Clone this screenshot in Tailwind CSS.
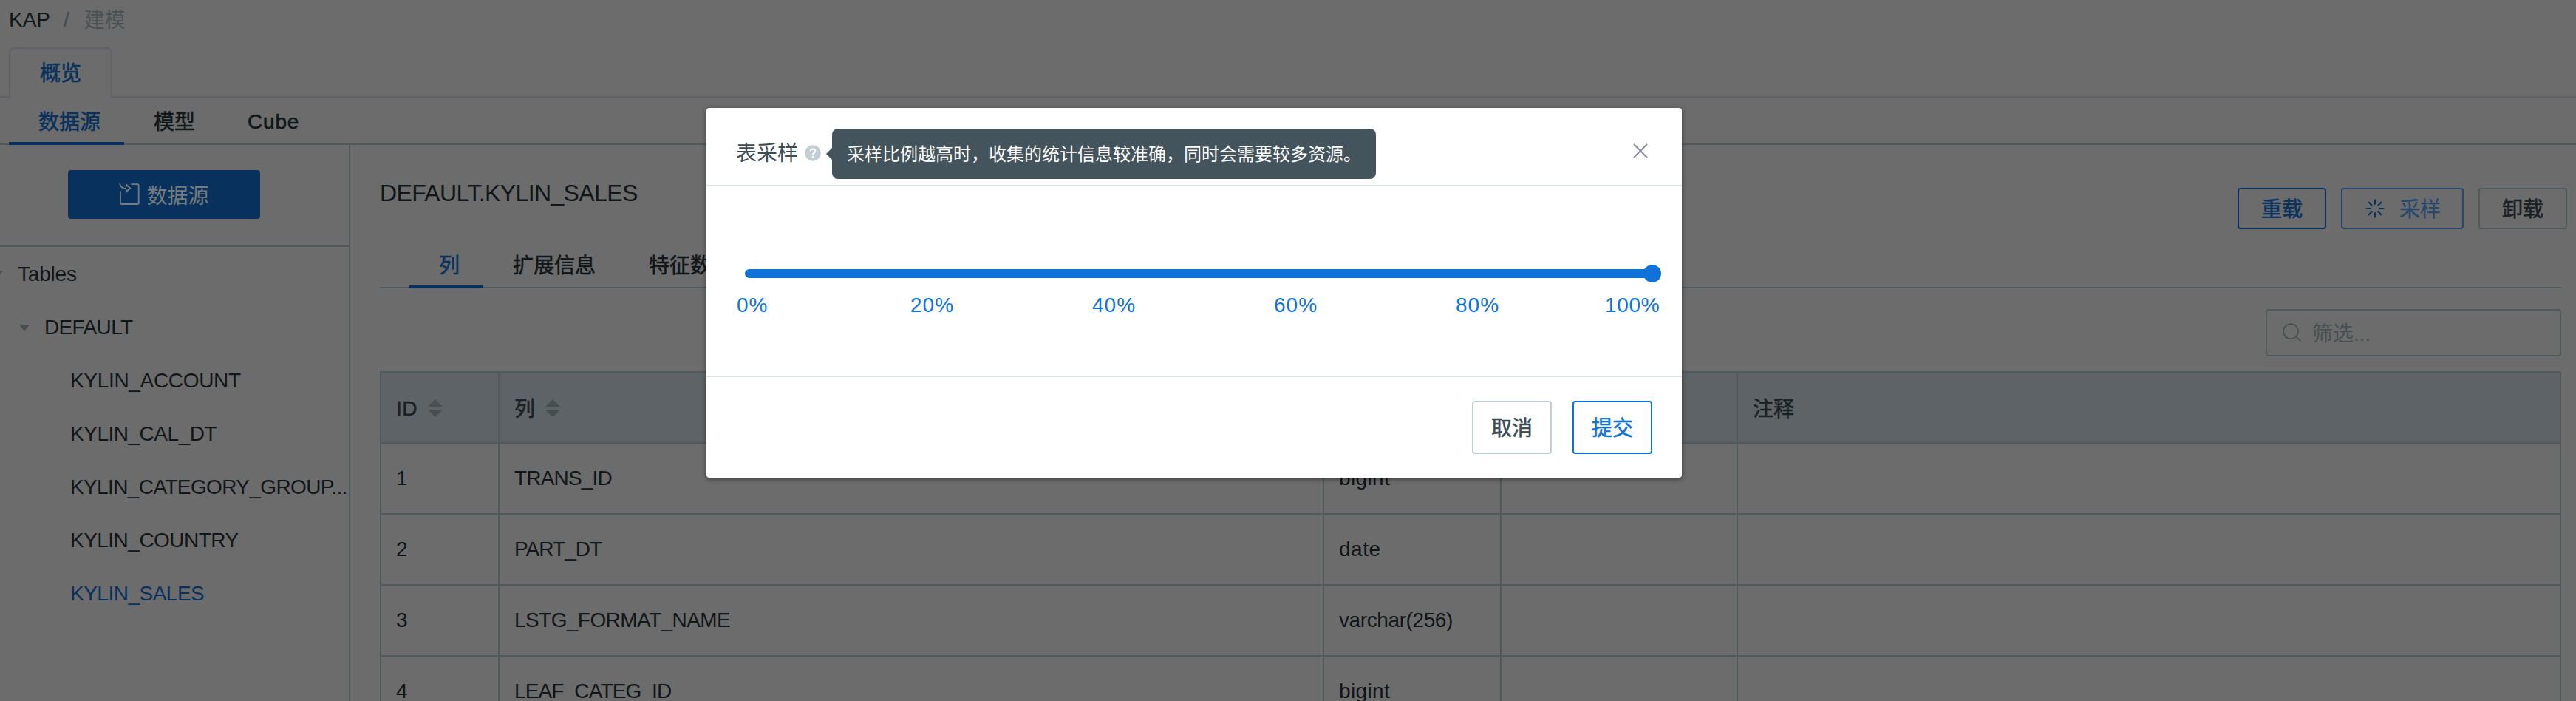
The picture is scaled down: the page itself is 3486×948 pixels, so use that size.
<!DOCTYPE html>
<html lang="zh-CN">
<head>
<meta charset="utf-8">
<title>KAP</title>
<script src="https://cdn.jsdelivr.net/npm/@tailwindcss/browser@4"></script>
</head>
<body class="relative h-[948px] w-[3486px] overflow-hidden bg-[#6c6c6c] font-['Liberation_Sans','Noto_Sans_CJK_SC',sans-serif] text-[28px] leading-10 text-[#111618]">

<!-- Breadcrumb -->
<nav class="flex h-16 items-start pl-3 pt-[7px]">
  <span>KAP</span><span class="ml-[18px] text-[#454e51] [-webkit-text-stroke:0.6px]">/</span><span class="ml-[20px] mt-px text-[#4a5254]">建模</span>
</nav>

<!-- Card tabs -->
<div class="flex h-[68px]">
  <div class="w-3 border-b-2 border-[#626167]"></div>
  <div class="flex w-[140px] items-center justify-center rounded-t-lg border-2 border-b-0 border-[#626167] pt-[2px] text-[#08325d] [-webkit-text-stroke:0.6px]"><span>概览</span></div>
  <div class="flex-1 border-b-2 border-[#626167]"></div>
</div>

<!-- Section tabs -->
<div class="flex h-16 border-b-2 border-[#52595c] pl-3 [-webkit-text-stroke:0.6px]">
  <div class="-mb-[2px] w-[156px] border-b-4 border-[#08325d] pl-10 pt-[14px] text-[#08325d]"><span>数据源</span></div>
  <div class="w-[128px] pl-10 pt-[14px]"><span>模型</span></div>
  <div class="pl-[39px] pt-[13px]"><span class="tracking-[0.8px]">Cube</span></div>
</div>

<div class="flex h-[752px]">
  <!-- Data source tree -->
  <aside class="w-[474px] shrink-0 border-r-2 border-[#52595c]">
    <div class="h-[138px] border-b-2 border-[#52595c] pl-[92px] pt-[34px]">
      <button class="flex h-[66px] w-[260px] items-center justify-center rounded-[4px] bg-[#08325d] text-[#777b7d]">
        <svg class="mr-[9px] h-[30px] w-[28px]" viewBox="0 0 28 30" fill="none" stroke="currentColor" stroke-width="1.800"><path d="M16.500 1.200h8.500q1.700 0 1.700 1.700v23.400q0 1.700-1.700 1.700H3.800Q2 28 2 26.300V10.500M1 0.500Q2.500 7 10 7M9.800 4.800V1.500L15.300 6.500 9.800 11.500V8.200"/></svg>
        <span class="mt-1.5">数据源</span>
      </button>
    </div>
    <div class="flex h-[72px] items-center pt-[2px]"><svg class="h-[10px] w-6" viewBox="0 0 24 10"><path d="M-10 0H4L-3 9z" fill="#4a5254"/></svg><span class="tracking-[-0.2px]">Tables</span></div>
    <div class="flex h-[72px] items-center pt-[2px]"><svg class="ml-[26px] mr-5 h-[9px] w-[14px]" viewBox="0 0 14 9"><path d="M0 0h14L7 9z" fill="#465052"/></svg><span class="tracking-[-0.64px]">DEFAULT</span></div>
    <div class="flex h-[72px] items-center pl-[95px] pt-[2px]"><span class="tracking-[-0.32px]">KYLIN_ACCOUNT</span></div>
    <div class="flex h-[72px] items-center pl-[95px] pt-[2px]"><span class="tracking-[-0.48px]">KYLIN_CAL_DT</span></div>
    <div class="flex h-[72px] items-center pl-[95px] pt-[2px]"><span class="tracking-[-0.62px]">KYLIN_CATEGORY_GROUP...</span></div>
    <div class="flex h-[72px] items-center pl-[95px] pt-[2px]"><span class="tracking-[-0.52px]">KYLIN_COUNTRY</span></div>
    <div class="flex h-[72px] items-center pl-[95px] pt-[2px] text-[#08325d]"><span class="tracking-[-0.5px]">KYLIN_SALES</span></div>
  </aside>

  <main class="flex-1 pl-10">
    <div class="flex h-[126px] justify-between pr-3">
      <h1 class="pt-[45px] text-[32px] leading-10 tracking-[-0.62px]">DEFAULT.KYLIN_SALES</h1>
      <div class="flex gap-5 pt-[58px] [-webkit-text-stroke:0.6px]">
        <button class="flex h-14 w-[120px] items-center justify-center rounded-[4px] border-2 border-[#08325d] pt-1 text-[#08325d]">重载</button>
        <button class="flex h-14 w-[166px] items-center rounded-[4px] border-2 border-[#27486a] pl-[31px] text-[#27486a]">
          <svg class="mr-5 h-[26px] w-[26px]" viewBox="0 0 26 26" stroke="#08325d" stroke-width="2" stroke-linecap="round"><path d="M13 1.500v5.500M13 19v5.500M1.500 13h5.500M19 13h5.500M4.500 4.500l4.200 4.200M17.300 17.300l4.200 4.200M4.500 21.500l4.200-4.200M17.300 8.700l4.200-4.200"/></svg>
          <span class="mt-1 [-webkit-text-stroke:0.3px]">采样</span></button>
        <button class="flex h-14 w-[120px] items-center justify-center rounded-[4px] border-2 border-[#52595c] pt-1 text-[#1a2124]">卸载</button>
      </div>
    </div>

    <!-- Detail tabs -->
    <div class="mr-5 flex h-[68px] border-b-2 border-[#52595c] pl-10 [-webkit-text-stroke:0.6px]">
      <div class="-mb-[2px] w-[100px] border-b-4 border-[#08325d] pl-10 pt-[18px] text-[#08325d]">列</div>
      <div class="w-[184px] pl-10 pt-[18px]">扩展信息</div>
      <div class="pl-10 pt-[18px]">特征数据</div>
    </div>

    <div class="mr-5 flex h-28 justify-end pt-7">
      <div class="flex h-16 w-[400px] items-center rounded-[4px] border-2 border-[#52595c] pl-[21px] text-[#464f51]">
        <svg class="mr-[14px] h-[26px] w-[26px]" viewBox="0 0 26 26" fill="none" stroke="currentColor" stroke-width="1.600"><circle cx="11" cy="11" r="10"/><path d="M18 18l7 7"/></svg>
        <span class="mt-1">筛选...</span>
      </div>
    </div>

    <!-- Column table -->
    <div class="mr-5 grid grid-cols-[162px_1116px_240px_320px_1114px] border-t-2 border-[#52595c] [&>div]:flex [&>div]:h-24 [&>div]:items-center [&>div]:border-b-2 [&>div]:border-r-2 [&>div]:border-[#52595c] [&>div]:pl-5 [&>div:nth-child(5n+1)]:border-l-2 [&>div:nth-child(-n+5)]:bg-[#5d6366] [&>div:nth-child(-n+5)]:text-[#1a2124] [&>div:nth-child(-n+5)]:[-webkit-text-stroke:0.6px]">
      <div><span class="mt-1 tracking-[0.4px]">ID</span><svg class="ml-[14px] mt-[2px] h-6 w-5" viewBox="0 0 20 24" fill="#464e50" stroke="none"><path d="M0 10L10 0l10 10zM0 14h20L10 24z"/></svg></div>
      <div><span class="mt-1.5">列</span><svg class="ml-[14px] mt-[2px] h-6 w-5" viewBox="0 0 20 24" fill="#464e50" stroke="none"><path d="M0 10L10 0l10 10zM0 14h20L10 24z"/></svg></div>
      <div></div><div></div><div><span class="mt-1.5">注释</span></div>
      <div>1</div><div><span class="tracking-[-0.82px]">TRANS_ID</span></div><div><span class="tracking-[0.37px]">bigint</span></div><div></div><div></div>
      <div>2</div><div><span class="tracking-[-0.98px]">PART_DT</span></div><div><span class="tracking-[0.5px]">date</span></div><div></div><div></div>
      <div>3</div><div><span class="tracking-[-0.57px]">LSTG_FORMAT_NAME</span></div><div><span class="tracking-[-0.4px]">varchar(256)</span></div><div></div><div></div>
      <div>4</div><div><span class="tracking-[-0.86px]">LEAF_CATEG_ID</span></div><div><span class="tracking-[0.37px]">bigint</span></div><div></div><div></div>
    </div>
  </main>
</div>

<!-- Sampling dialog -->
<div class="absolute left-[956px] top-[146px] h-[500px] w-[1320px] rounded-[4px] bg-white text-[#3a4c54] shadow-[0_2px_6px_rgba(0,0,0,0.5)]">
  <header class="flex h-[106px] items-center border-b-2 border-[#dfe3e8] pl-10 pr-[46px]">
    <span class="mt-5">表采样</span>
    <svg class="ml-[9px] mt-[18px] h-[22px] w-[22px]" viewBox="0 0 22 22"><circle cx="11" cy="11" r="10.700" fill="#c3ced2"/><path d="M7.800 8.300q0.200-2.800 3.300-2.800t3.200 2.600q0 1.500-1.600 2.400t-1.500 2.500" fill="none" stroke="#fff" stroke-width="2.200"/><circle cx="11.200" cy="16" r="1.500" fill="#fff"/></svg>
    <svg class="ml-[7px] mt-5 h-4 w-2" viewBox="0 0 8 16"><path d="M8 0v16L0 8z" fill="#44545d"/></svg>
    <div class="mt-5 flex h-[68px] w-[736px] items-center whitespace-nowrap rounded-lg bg-[#44545d] pl-5 pt-[2px] text-2xl text-white">采样比例越高时，收集的统计信息较准确，同时会需要较多资源。</div>
    <svg class="ml-auto mt-3 h-5 w-5" viewBox="0 0 20 20" stroke="#878d99" stroke-width="2"><path d="M1 1l18 18M19 1L1 19"/></svg>
  </header>
  <div class="h-[258px] border-b-2 border-[#dfe3e8] pt-[106px] text-[#0f72d8]">
    <div class="ml-[52px] flex h-6 w-[1240px] items-center"><div class="h-3 flex-1 rounded-l-md bg-[#0f72d8]"></div><div class="-ml-2 h-6 w-6 rounded-full bg-[#0f72d8]"></div></div>
    <div class="grid grid-cols-[235px_246px_246px_246px_202px_auto] pl-[41px] pt-[11px] tracking-[1px]"><span>0%</span><span>20%</span><span>40%</span><span>60%</span><span>80%</span><span class="tracking-[0.7px]">100%</span></div>
  </div>
  <footer class="flex justify-end gap-7 pr-10 pt-8 [-webkit-text-stroke:0.6px]">
    <button class="h-[72px] w-[108px] rounded-[4px] border-2 border-[#c3ced2] pt-[3px]">取消</button>
    <button class="h-[72px] w-[108px] rounded-[4px] border-2 border-[#0f72d8] pt-[3px] text-[#0f72d8]">提交</button>
  </footer>
</div>
</body>
</html>
